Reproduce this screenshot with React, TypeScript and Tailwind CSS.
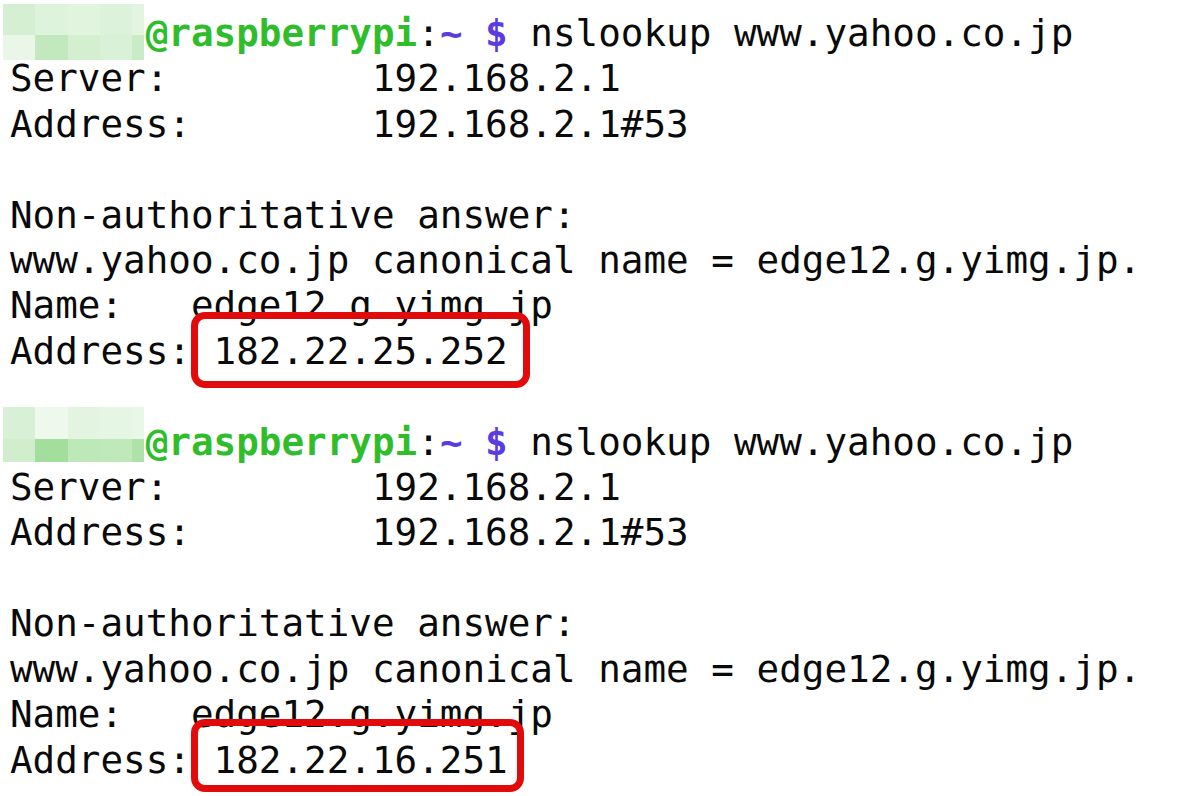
import type { ReactNode } from "react";

const mosaics = [
  {
    top: "-top-[7px]",
    split: "grid-rows-[31px_25px]",
    cells: [
      "#d5efd3", "#def3dc", "#e0f4de", "#ddf2db", "#e3f5e1",
      "#e9f6e8", "#c2e9bd", "#d3efd0", "#d9f1d6", "#c9ebc5",
    ],
  },
  {
    top: "-top-[13px]",
    split: "grid-rows-[32px_23px]",
    cells: [
      "#d8f0d5", "#eef8ed", "#e3f5e1", "#e6f6e4", "#e9f7e8",
      "#d0eecc", "#a3df9c", "#bde8b7", "#c0e9ba", "#afe2a8",
    ],
  },
];

function Prompt({ m }: { m: number }) {
  const mosaic = mosaics[m];
  return (
    <div className="relative">
      {/* blurred user name */}
      <div
        className={`absolute left-[-7px] ${mosaic.top} grid grid-cols-[32px_33px_32px_32px_12px] ${mosaic.split}`}
      >
        {mosaic.cells.map((c, i) => (
          <div key={i} style={{ background: c }} />
        ))}
      </div>
      <span>{"      "}</span>
      <span className="font-bold text-[#2fbd2c]">@raspberrypi</span>
      <span>:</span>
      <span className="font-bold text-[#5a3ce0]">~ $</span>
      <span> nslookup www.yahoo.co.jp</span>
    </div>
  );
}

function Boxed({ children, box }: { children: ReactNode; box: string }) {
  return (
    <span className="relative">
      {children}
      <span className={`absolute rounded-[14px] border-[7px] border-[#e10b0b] ${box}`} />
    </span>
  );
}

function Block({ m, ip, box }: { m: number; ip: string; box: string }) {
  return (
    <>
      <Prompt m={m} />
      <div>{"Server:         192.168.2.1"}</div>
      <div>{"Address:        192.168.2.1#53"}</div>
      <div>{"\u00a0"}</div>
      <div>{"Non-authoritative answer:"}</div>
      <div>{"www.yahoo.co.jp canonical name = edge12.g.yimg.jp."}</div>
      <div>{"Name:   edge12.g.yimg.jp"}</div>
      <div>
        {"Address:"}
        <Boxed box={box}>{` ${ip} `}</Boxed>
      </div>
    </>
  );
}

export default function App() {
  return (
    <div className="w-[1200px] h-[796px] overflow-hidden bg-white">
      <pre className="pt-[11px] pl-[10px] font-['DejaVu_Sans_Mono',monospace] text-[37.6px] leading-[45.4px] text-[#0a0a0a]">
        <Block m={0} ip="182.22.25.252" box="left-0 right-0 -top-[17px] -bottom-[15px]" />
        <div>{"\u00a0"}</div>
        <Block m={1} ip="182.22.16.251" box="left-0 right-[6px] -top-[19px] -bottom-[10px]" />
      </pre>
    </div>
  );
}
